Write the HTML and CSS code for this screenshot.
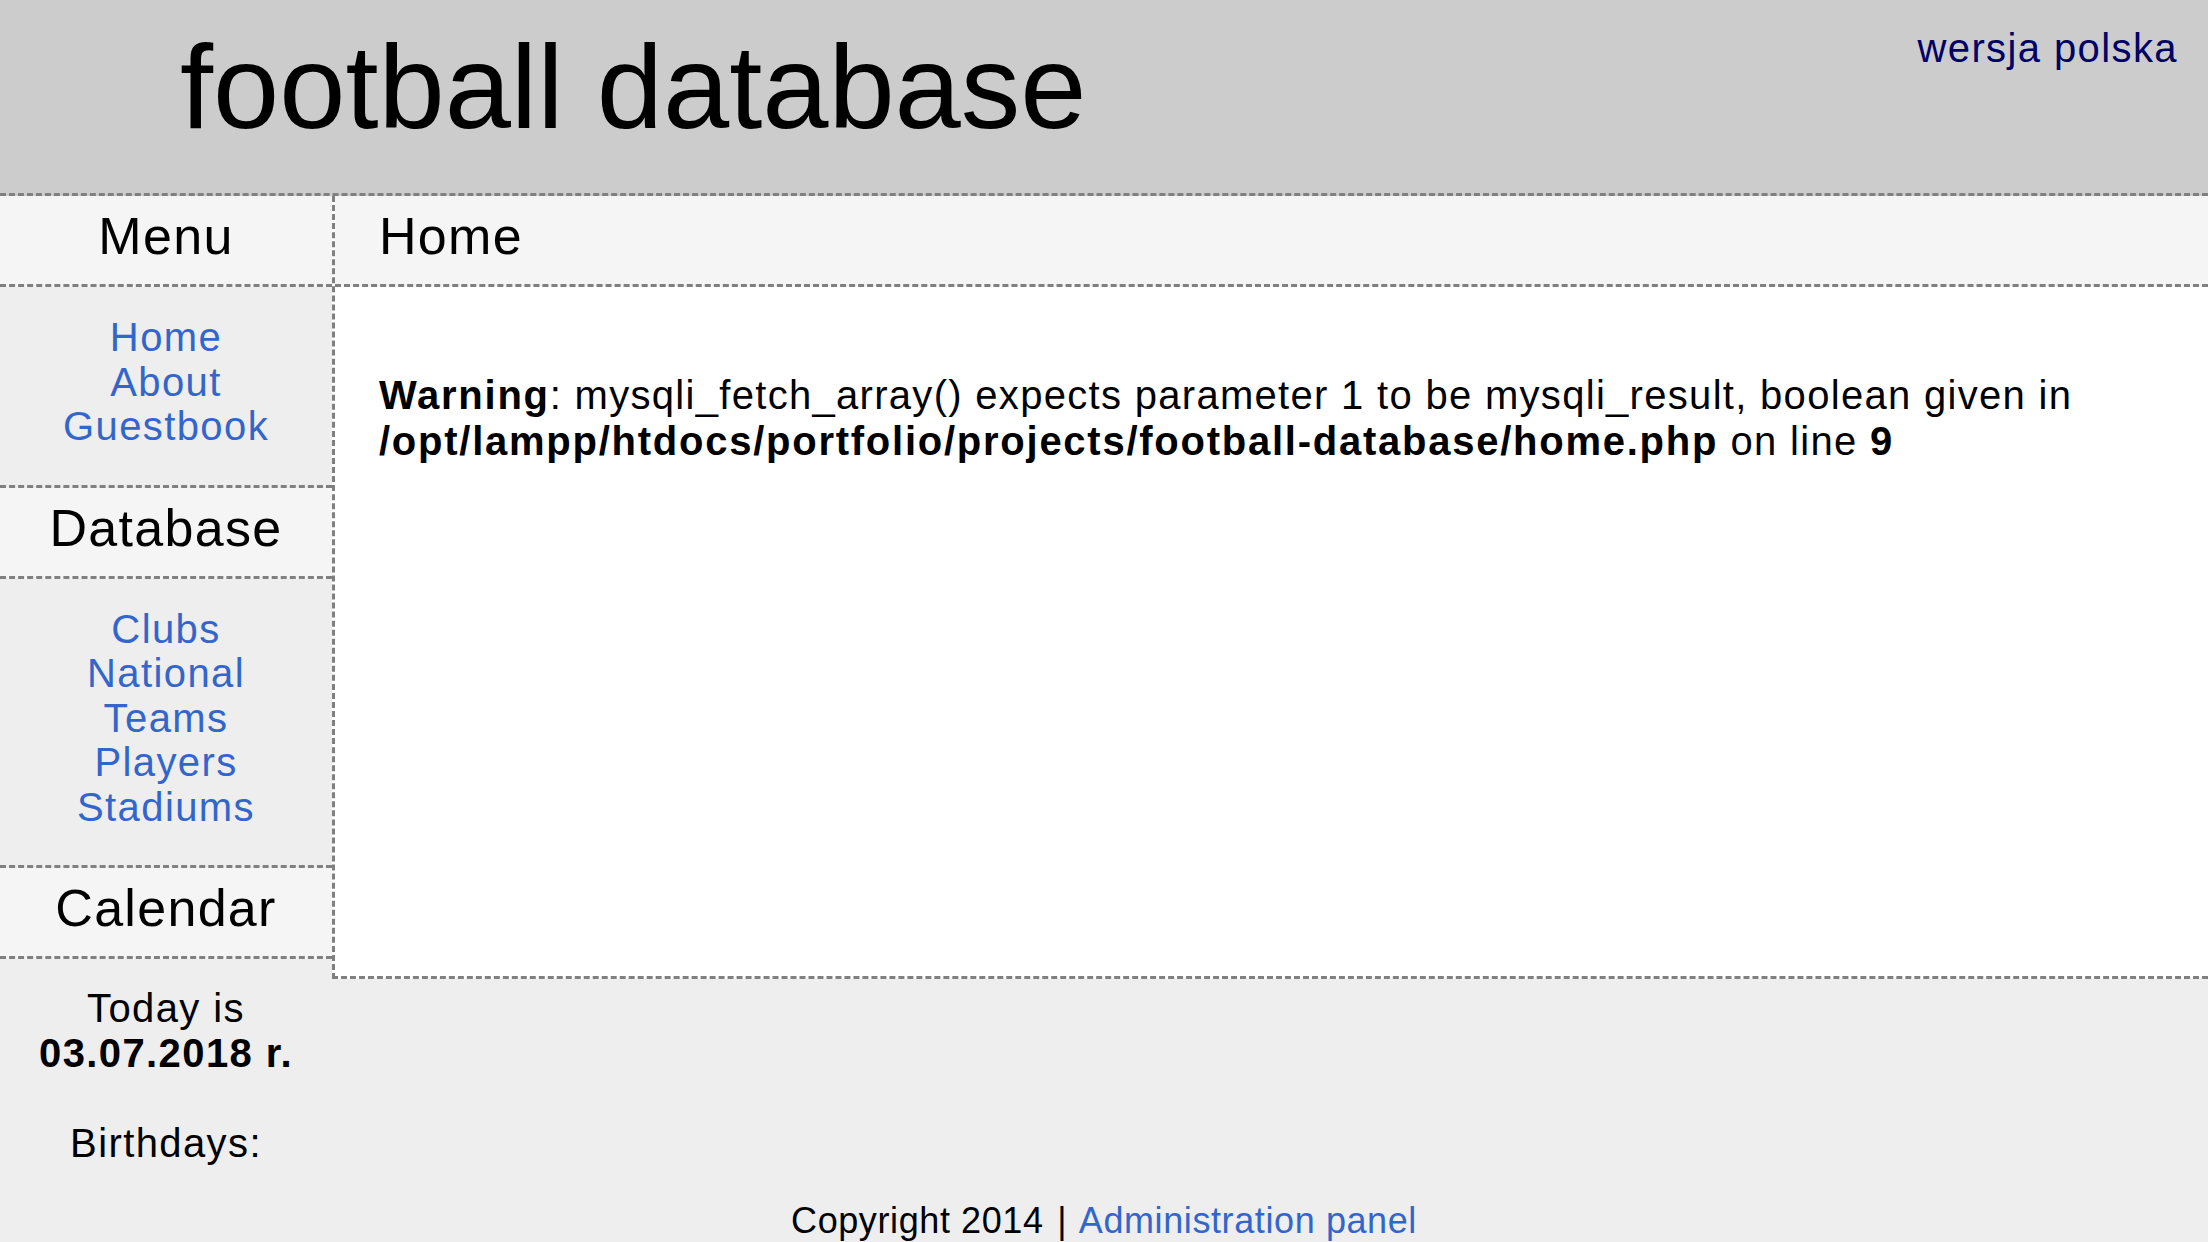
FILE: index.html
```html
<!DOCTYPE html>
<html lang="en">
<head>
<meta charset="utf-8">
<title>football database</title>
<link rel="stylesheet" href="styles.css">
</head>
<body>
<header class="top">
  <h1 class="site-title">football database</h1>
  <a class="lang" href="#">wersja polska</a>
</header>
<div class="layout">
  <aside class="sidebar">
    <div class="side-head">Menu</div>
    <ul class="side-links">
      <li><a href="#">Home</a></li>
      <li><a href="#">About</a></li>
      <li><a href="#">Guestbook</a></li>
    </ul>
    <div class="side-head">Database</div>
    <ul class="side-links">
      <li><a href="#">Clubs</a></li>
      <li><a href="#">National</a></li>
      <li><a href="#">Teams</a></li>
      <li><a href="#">Players</a></li>
      <li><a href="#">Stadiums</a></li>
    </ul>
    <div class="side-head">Calendar</div>
    <div class="calendar">
      <div>Today is</div>
      <div class="date">03.07.2018 r.</div>
      <div class="blank">&nbsp;</div>
      <div>Birthdays:</div>
    </div>
  </aside>
  <main class="main">
    <div class="main-head">Home</div>
    <div class="main-body">
      <p class="warning"><b>Warning</b>: mysqli_fetch_array() expects parameter 1 to be mysqli_result, boolean given in <b>/opt/lampp/htdocs/portfolio/projects/football-database/home.php</b> on line <b>9</b></p>
    </div>
  </main>
</div>
<footer class="footer">Copyright 2014 <span class="sep">|</span> <a href="#">Administration panel</a></footer>
</body>
</html>
```
FILE: styles.css
```css
html, body {
  margin: 0;
  padding: 0;
}
body {
  background: #eeeeee;
  font-family: "Liberation Sans", Arial, sans-serif;
  font-size: 40px;
  letter-spacing: 1.4px;
  color: #000;
}
a {
  color: #3366cc;
  text-decoration: none;
}
.top {
  background: #cccccc;
  height: 193px;
  border-bottom: 3px dashed #808080;
  display: flex;
  justify-content: space-between;
  align-items: flex-start;
  padding: 0 30px 0 180px;
}
.site-title {
  margin: 0;
  padding-top: 18px;
  font-size: 119px;
  font-weight: normal;
  line-height: normal;
  letter-spacing: 0;
}
.lang {
  color: #000066;
  font-size: 40px;
  margin-top: 26px;
}
.layout {
  display: flex;
  align-items: flex-start;
}
.sidebar {
  width: 332px;
  flex: none;
  text-align: center;
}
.side-head {
  background: #f5f5f5;
  font-size: 52px;
  letter-spacing: 1.3px;
  line-height: 58px;
  padding: 11px 0 19px;
  border-bottom: 3px dashed #808080;
}
.side-links {
  list-style: none;
  margin: 0;
  padding: 28px 0 36px;
  line-height: 44.5px;
  border-bottom: 3px dashed #808080;
}
.calendar {
  padding-top: 27px;
  line-height: 45px;
}
.date {
  font-weight: bold;
}
.main {
  flex: 1;
  border-left: 3px dashed #808080;
  border-bottom: 3px dashed #808080;
  background: #fff;
}
.main-head {
  background: #f5f5f5;
  font-size: 52px;
  letter-spacing: 1.3px;
  line-height: 58px;
  padding: 11px 0 19px 44px;
  border-bottom: 3px dashed #808080;
}
.main-body {
  min-height: 689px;
  box-sizing: border-box;
  padding: 85px 30px 0 44px;
}
.warning {
  margin: 0;
  line-height: 46px;
  letter-spacing: 1.3px;
}
.warning b {
  letter-spacing: 1.75px;
}
.footer {
  text-align: center;
  font-size: 36px;
  letter-spacing: 0.6px;
  padding-top: 34px;
  padding-bottom: 20px;
}
.sep {
  padding: 0 3px;
}
```
